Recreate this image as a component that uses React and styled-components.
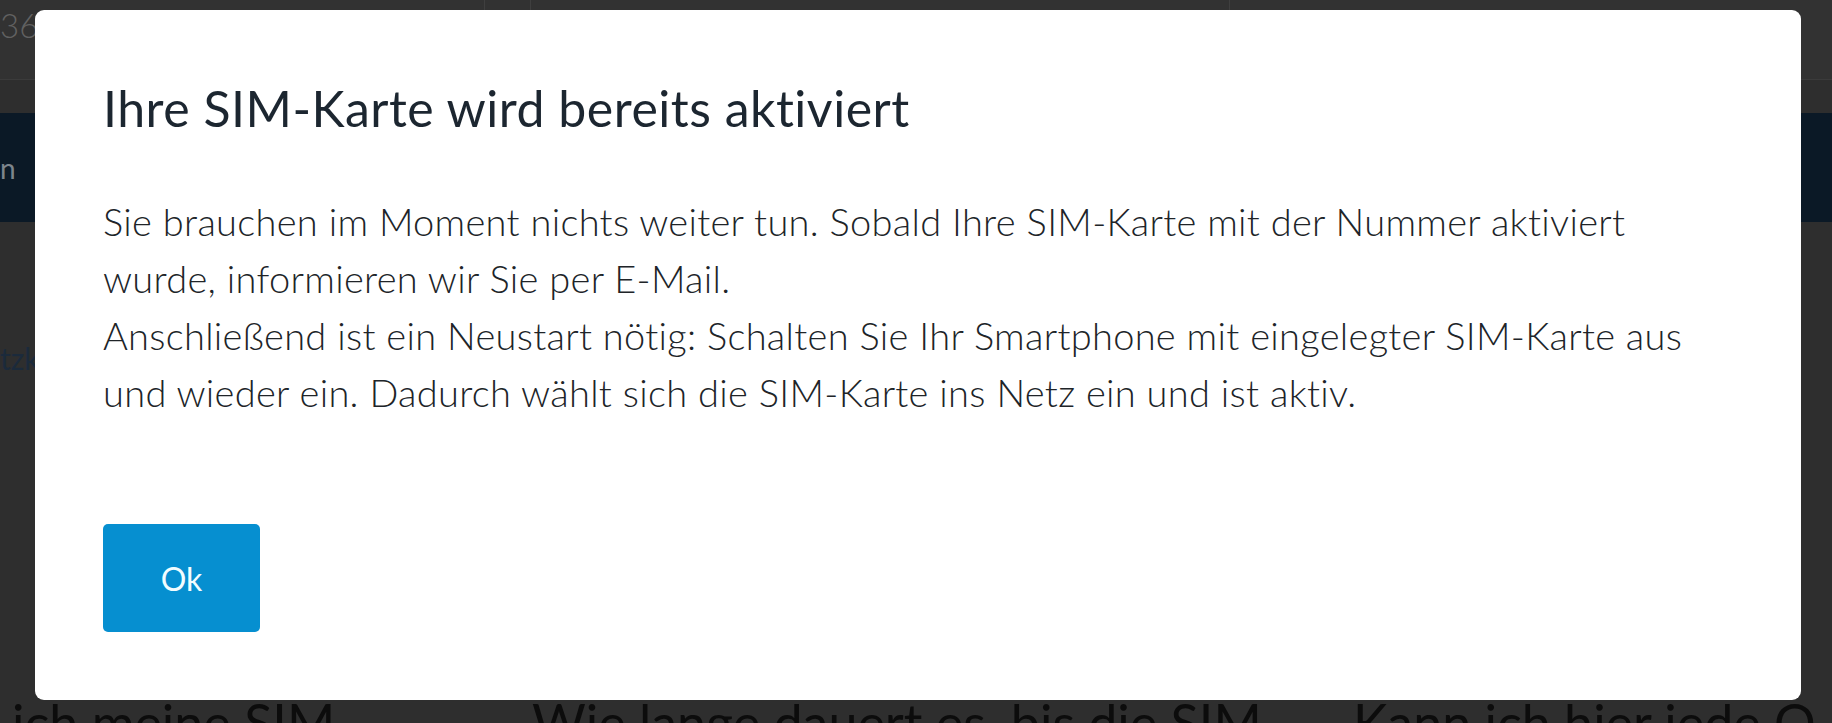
import styled, { createGlobalStyle } from "styled-components";

const GlobalStyle = createGlobalStyle`
  html, body {
    margin: 0;
    height: 100%;
    overflow: hidden;
    background: #2e2e2e;
  }
  body {
    font-family: Lato, "Noto Sans", sans-serif;
  }
`;

/* page behind the dialog (already dimmed) */
const Page = styled.div`
  height: 723px;
  display: flex;
  flex-direction: column;
  overflow: hidden;

  & > * {
    flex: none;
  }
`;

const Header = styled.header`
  display: flex;
  height: 79px;
  border-bottom: 1px solid #3b3b3b;
  background: #323232;
`;

const HeaderCell = styled.div`
  width: ${(p) => p.$w || "auto"};
  flex: ${(p) => (p.$w ? "none" : 1)};
  border-left: ${(p) => (p.$first ? "none" : "1px solid #3f3f3f")};
  padding-top: 8px;
  font-size: 33px;
  font-weight: 300;
  line-height: 34px;
  color: #616161;
  white-space: nowrap;
`;

const Main = styled.main`
  display: flex;
  flex-direction: column;
  padding-top: 33px;

  & > * {
    flex: none;
  }
`;

const Banner = styled.div`
  height: 109px;
  background: #0b1926;
  color: #7d858c;
  font-size: 28px;
  display: flex;
  align-items: center;
`;

const TextLink = styled.div`
  margin-top: 119px;
  font-size: 30px;
  line-height: 34px;
  color: #1b2a3b;
`;

const FaqRow = styled.div`
  display: grid;
  grid-template-columns: 520px 821px 1fr;
  margin-top: 316px;
  padding-left: 12px;
  font-size: 52px;
  line-height: 62px;
  color: #0c0c0c;
  white-space: nowrap;
`;

/* dialog */
const Overlay = styled.div`
  position: fixed;
  inset: 0;
  display: flex;
  align-items: flex-start;
  padding: 10px 31px 23px 35px;
  box-sizing: border-box;
`;

const Dialog = styled.div`
  flex: 1;
  height: 690px;
  box-sizing: border-box;
  padding: 70px 68px 68px;
  background: #ffffff;
  border-radius: 9px;
  display: flex;
  flex-direction: column;
  align-items: flex-start;
`;

const Title = styled.h2`
  margin: 0;
  font-size: 50px;
  line-height: 56px;
  letter-spacing: 0.5px;
  font-weight: 400;
  color: #1c2630;
`;

const Text = styled.p`
  margin: 57px 0 0;
  font-size: 38px;
  line-height: 57px;
  letter-spacing: 0.3px;
  font-weight: 300;
  color: #202428;
  white-space: nowrap;
`;

const OkButton = styled.button`
  margin-top: 103px;
  width: 157px;
  height: 108px;
  border: none;
  border-radius: 5px;
  background: #068fd0;
  color: #f2fdff;
  font-family: inherit;
  font-size: 32px;
  cursor: pointer;
`;

const App = () => {
  return (
    <>
      <GlobalStyle />
      <Page>
        <Header>
          <HeaderCell $first $w="484px">36</HeaderCell>
          <HeaderCell $w="45px" />
          <HeaderCell $w="698px" />
          <HeaderCell />
        </Header>
        <Main>
          <Banner>n</Banner>
          <TextLink>tzk</TextLink>
          <FaqRow>
            <div>ich meine SIM</div>
            <div>Wie lange dauert es, bis die SIM</div>
            <div>Kann ich hier jede Q</div>
          </FaqRow>
        </Main>
      </Page>

      <Overlay>
        <Dialog role="dialog">
          <Title>Ihre SIM-Karte wird bereits aktiviert</Title>
          <Text>
            Sie brauchen im Moment nichts weiter tun. Sobald Ihre SIM-Karte mit der Nummer aktiviert
            <br />
            wurde, informieren wir Sie per E-Mail.
            <br />
            Anschließend ist ein Neustart nötig: Schalten Sie Ihr Smartphone mit eingelegter SIM-Karte aus
            <br />
            und wieder ein. Dadurch wählt sich die SIM-Karte ins Netz ein und ist aktiv.
          </Text>
          <OkButton>Ok</OkButton>
        </Dialog>
      </Overlay>
    </>
  );
};

export default App;
